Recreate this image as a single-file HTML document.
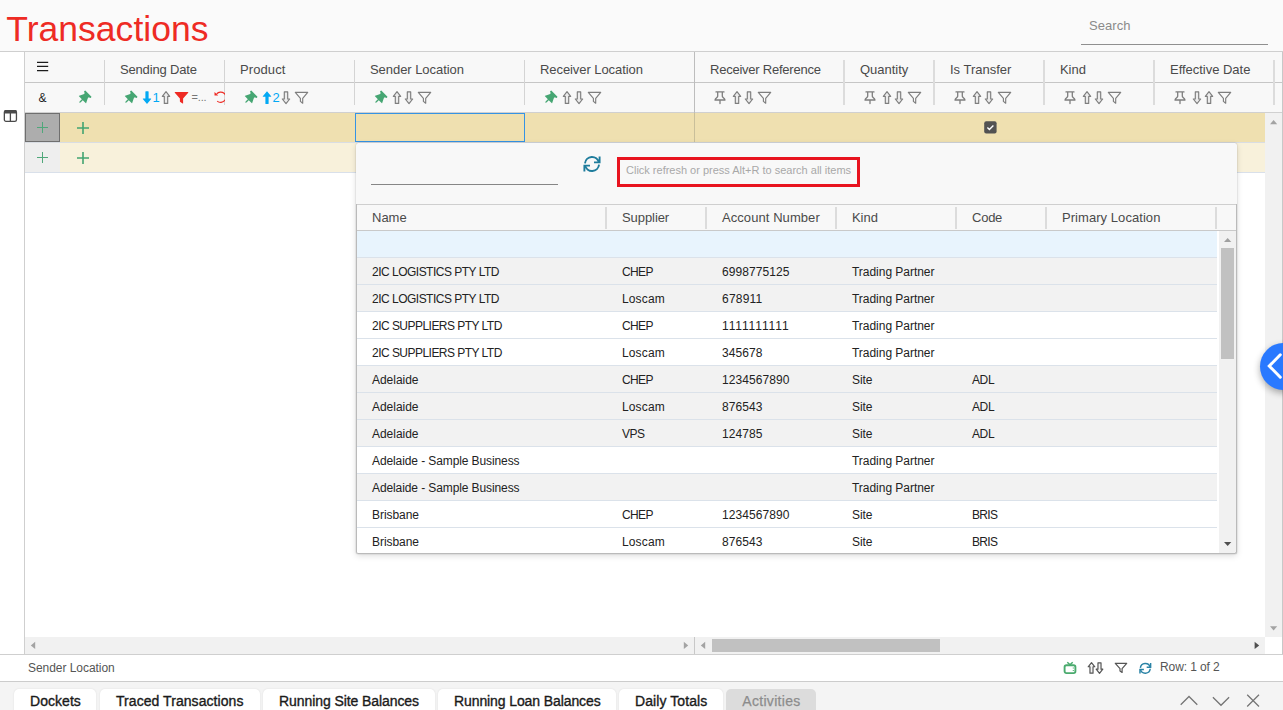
<!DOCTYPE html>
<html lang="en"><head><meta charset="utf-8"><title>Transactions</title>
<style>
html,body{margin:0;padding:0}
body{width:1283px;height:710px;overflow:hidden;position:relative;background:#fafafa;font-family:"Liberation Sans",sans-serif}
.r{position:absolute;display:block}
.t{position:absolute;white-space:pre;font-family:"Liberation Sans",sans-serif}
</style></head><body>
<div class="t" style="left:6.3px;top:9.85px;font-size:35.5px;line-height:39.5px;color:#ee2b24;letter-spacing:0.024px;">Transactions</div>
<div class="t" style="left:1089px;top:16.5px;font-size:13px;line-height:17px;color:#8a8a8a;letter-spacing:0.049px;">Search</div>
<div class="r" style="left:1081px;top:44px;width:187px;height:1px;background:#8f8f8f;"></div>
<div class="r" style="left:0px;top:51px;width:1283px;height:1px;background:#cfcfcf;"></div>
<div class="r" style="left:0px;top:52px;width:25px;height:602px;background:#ffffff;"></div>
<div class="r" style="left:25px;top:113px;width:1240px;height:524px;background:#ffffff;"></div>
<div class="r" style="left:24px;top:52px;width:1px;height:603px;background:#cfcfcf;"></div>
<div class="r" style="left:25px;top:52px;width:1257px;height:60px;background:#f8f8f8;"></div>
<div class="r" style="left:25px;top:82px;width:1258px;height:1px;background:#c6c6c6;"></div>
<div class="r" style="left:25px;top:112px;width:1258px;height:1px;background:#d0d0d0;"></div>
<div class="t" style="left:120px;top:61px;font-size:13px;line-height:17px;color:#4a4a4a;letter-spacing:-0.169px;">Sending Date</div>
<div class="t" style="left:240px;top:61px;font-size:13px;line-height:17px;color:#4a4a4a;letter-spacing:0.092px;">Product</div>
<div class="t" style="left:370px;top:61px;font-size:13px;line-height:17px;color:#4a4a4a;letter-spacing:-0.049px;">Sender Location</div>
<div class="t" style="left:540px;top:61px;font-size:13px;line-height:17px;color:#4a4a4a;letter-spacing:-0.074px;">Receiver Location</div>
<div class="t" style="left:710px;top:61px;font-size:13px;line-height:17px;color:#4a4a4a;letter-spacing:-0.231px;">Receiver Reference</div>
<div class="t" style="left:860px;top:61px;font-size:13px;line-height:17px;color:#4a4a4a;letter-spacing:-0.029px;">Quantity</div>
<div class="t" style="left:950px;top:61px;font-size:13px;line-height:17px;color:#4a4a4a;letter-spacing:-0.013px;">Is Transfer</div>
<div class="t" style="left:1060px;top:61px;font-size:13px;line-height:17px;color:#4a4a4a;letter-spacing:-0.047px;">Kind</div>
<div class="t" style="left:1170px;top:61px;font-size:13px;line-height:17px;color:#4a4a4a;letter-spacing:-0.025px;">Effective Date</div>
<div class="r" style="left:104px;top:60px;width:1px;height:45px;background:#d4d4d4;"></div>
<div class="r" style="left:224px;top:60px;width:1px;height:45px;background:#d4d4d4;"></div>
<div class="r" style="left:354px;top:60px;width:1px;height:45px;background:#d4d4d4;"></div>
<div class="r" style="left:524px;top:60px;width:1px;height:45px;background:#d4d4d4;"></div>
<div class="r" style="left:843px;top:60px;width:2px;height:45px;background:#dcdcdc;"></div>
<div class="r" style="left:933px;top:60px;width:2px;height:45px;background:#dcdcdc;"></div>
<div class="r" style="left:1043px;top:60px;width:2px;height:45px;background:#dcdcdc;"></div>
<div class="r" style="left:1153px;top:60px;width:2px;height:45px;background:#dcdcdc;"></div>
<div class="r" style="left:1273px;top:60px;width:2px;height:45px;background:#dcdcdc;"></div>
<div class="r" style="left:694px;top:52px;width:1px;height:90px;background:#bdbdbd;"></div>
<svg class="r" style="left:36px;top:60px;" width="13" height="13" viewBox="0 0 13 13"><path d="M1 2.300h11.200M1 6.400h11.200M1 10.600h11.200" stroke="#1c1c1c" stroke-width="1.250" fill="none"/></svg>
<div class="t" style="left:38.5px;top:89.5px;font-size:12px;line-height:16px;color:#222;letter-spacing:-0.547px;">&amp;</div>
<svg class="r" style="left:75.3px;top:88.6px;" width="18" height="18" viewBox="0 0 18 18"><g transform="translate(9,9) rotate(45) translate(0,-6.7)" fill="#46a673"><path d="M-4.050 .5h8.100q.5 0 .5.500v1q0 .5-.5.500h-1.250L2.900 4.400 5 8.600q.2.5-.3.500H.650v3.200l-.65 1.100-.65-1.100v-3.200H-4.700q-.5 0-.3-.5L-2.900 4.400-2.800 2.500h-1.250q-.5 0-.5-.5v-1q0-.5.500-.5z"/></g></svg>
<svg class="r" style="left:120.85px;top:88.6px;" width="18" height="18" viewBox="0 0 18 18"><g transform="translate(9,9) rotate(45) translate(0,-6.7)" fill="#46a673"><path d="M-4.050 .5h8.100q.5 0 .5.500v1q0 .5-.5.500h-1.250L2.900 4.400 5 8.600q.2.5-.3.500H.650v3.200l-.65 1.100-.65-1.100v-3.200H-4.700q-.5 0-.3-.5L-2.900 4.400-2.800 2.500h-1.250q-.5 0-.5-.5v-1q0-.5.500-.5z"/></g></svg>
<svg class="r" style="left:142px;top:91px;" width="10" height="14" viewBox="0 0 10 14"><path d="M5 13.100 .8 8.100q-.2-.5.4-.5h2.200V.7q0-.5.5-.5h2.200q.5 0 .5.500v6.900h2.200q.6 0 .4.500z" fill="#03a9f4"/></svg>
<div class="t" style="left:152.6px;top:89px;font-size:13px;line-height:17px;color:#03a9f4;letter-spacing:0.078px;">1</div>
<svg class="r" style="left:161px;top:91px;" width="10" height="14" viewBox="0 0 10 14"><path d="M5 .700 1.300 5.300h2v7.100h3.400V5.300h2z" fill="#ececec" stroke="#7e7e7e" stroke-width="1.150" stroke-linejoin="round"/></svg>
<svg class="r" style="left:174px;top:91px;" width="15" height="14" viewBox="0 0 15 14"><path d="M1.200 1h12.600q.9 0 .4.800L9.100 7.600v4.600q0 .6-.5.300L6.300 11q-.4-.3-.4-.8V7.600L.8 1.800Q.3 1 1.200 1z" fill="#ee2b24"/></svg>
<div class="t" style="left:191.6px;top:90px;font-size:11px;line-height:15px;color:#777;letter-spacing:-0.211px;">=...</div>
<svg class="r" style="left:214px;top:90px;" width="11" height="15" viewBox="0 0 11 15"><path d="M.500 1.900v3.700h3.700z" fill="#ee2b24"/><path d="M2.700 3.900A5.200 5.200 0 1 1 3.200 11.100" fill="none" stroke="#ee2b24" stroke-width="1.200"/></svg>
<svg class="r" style="left:240.85px;top:88.6px;" width="18" height="18" viewBox="0 0 18 18"><g transform="translate(9,9) rotate(45) translate(0,-6.7)" fill="#46a673"><path d="M-4.050 .5h8.100q.5 0 .5.500v1q0 .5-.5.500h-1.250L2.900 4.400 5 8.600q.2.5-.3.500H.650v3.200l-.65 1.100-.65-1.100v-3.200H-4.700q-.5 0-.3-.5L-2.900 4.400-2.800 2.500h-1.250q-.5 0-.5-.5v-1q0-.5.500-.5z"/></g></svg>
<svg class="r" style="left:262px;top:91px;" width="10" height="14" viewBox="0 0 10 14"><path d="M5 0.200 .8 5.200q-.2.500.4.500h2.200v6.900q0 .5.500.5h2.200q.5 0 .5-.5V5.700h2.200q.6 0 .4-.5z" fill="#03a9f4"/></svg>
<div class="t" style="left:272.4px;top:89px;font-size:13px;line-height:17px;color:#03a9f4;letter-spacing:0.078px;">2</div>
<svg class="r" style="left:281px;top:91px;" width="10" height="14" viewBox="0 0 10 14"><path d="M5 12.600 1.300 8h2V.900h3.400V8h2z" fill="#ececec" stroke="#7e7e7e" stroke-width="1.150" stroke-linejoin="round"/></svg>
<svg class="r" style="left:294px;top:91px;" width="15" height="14" viewBox="0 0 15 14"><path d="M1.300 1.400h12.400L8.700 7.300v4.900L6.400 10.400V7.300z" fill="none" stroke="#7e7e7e" stroke-width="1.150" stroke-linejoin="round"/></svg>
<svg class="r" style="left:370.85px;top:88.6px;" width="18" height="18" viewBox="0 0 18 18"><g transform="translate(9,9) rotate(45) translate(0,-6.7)" fill="#46a673"><path d="M-4.050 .5h8.100q.5 0 .5.500v1q0 .5-.5.500h-1.250L2.900 4.400 5 8.600q.2.5-.3.500H.650v3.200l-.65 1.100-.65-1.100v-3.200H-4.700q-.5 0-.3-.5L-2.900 4.400-2.800 2.500h-1.250q-.5 0-.5-.5v-1q0-.5.500-.5z"/></g></svg>
<svg class="r" style="left:392px;top:91px;" width="10" height="14" viewBox="0 0 10 14"><path d="M5 .700 1.300 5.300h2v7.100h3.400V5.300h2z" fill="#ececec" stroke="#7e7e7e" stroke-width="1.150" stroke-linejoin="round"/></svg>
<svg class="r" style="left:404px;top:91px;" width="10" height="14" viewBox="0 0 10 14"><path d="M5 12.600 1.300 8h2V.900h3.400V8h2z" fill="#ececec" stroke="#7e7e7e" stroke-width="1.150" stroke-linejoin="round"/></svg>
<svg class="r" style="left:417px;top:91px;" width="15" height="14" viewBox="0 0 15 14"><path d="M1.300 1.400h12.400L8.700 7.300v4.900L6.400 10.400V7.300z" fill="none" stroke="#7e7e7e" stroke-width="1.150" stroke-linejoin="round"/></svg>
<svg class="r" style="left:540.85px;top:88.6px;" width="18" height="18" viewBox="0 0 18 18"><g transform="translate(9,9) rotate(45) translate(0,-6.7)" fill="#46a673"><path d="M-4.050 .5h8.100q.5 0 .5.500v1q0 .5-.5.500h-1.250L2.900 4.400 5 8.600q.2.5-.3.500H.650v3.200l-.65 1.100-.65-1.100v-3.200H-4.700q-.5 0-.3-.5L-2.900 4.400-2.800 2.500h-1.250q-.5 0-.5-.5v-1q0-.5.500-.5z"/></g></svg>
<svg class="r" style="left:562px;top:91px;" width="10" height="14" viewBox="0 0 10 14"><path d="M5 .700 1.300 5.300h2v7.100h3.400V5.300h2z" fill="#ececec" stroke="#7e7e7e" stroke-width="1.150" stroke-linejoin="round"/></svg>
<svg class="r" style="left:574px;top:91px;" width="10" height="14" viewBox="0 0 10 14"><path d="M5 12.600 1.300 8h2V.900h3.400V8h2z" fill="#ececec" stroke="#7e7e7e" stroke-width="1.150" stroke-linejoin="round"/></svg>
<svg class="r" style="left:587px;top:91px;" width="15" height="14" viewBox="0 0 15 14"><path d="M1.300 1.400h12.400L8.700 7.300v4.900L6.400 10.400V7.300z" fill="none" stroke="#7e7e7e" stroke-width="1.150" stroke-linejoin="round"/></svg>
<svg class="r" style="left:713px;top:91px;" width="14" height="14" viewBox="0 0 14 14"><g fill="none" stroke="#7e7e7e" stroke-width="1.3" stroke-linecap="round" stroke-linejoin="round"><path d="M3 0.9h8M4.700 0.900v4.400c0 1.200-2.400 1.700-2.700 3.700h10c-.3-2-2.700-2.500-2.700-3.700V0.900M7 9v3.500"/></g></svg>
<svg class="r" style="left:732px;top:91px;" width="10" height="14" viewBox="0 0 10 14"><path d="M5 .700 1.300 5.300h2v7.100h3.400V5.300h2z" fill="#ececec" stroke="#7e7e7e" stroke-width="1.150" stroke-linejoin="round"/></svg>
<svg class="r" style="left:744px;top:91px;" width="10" height="14" viewBox="0 0 10 14"><path d="M5 12.600 1.300 8h2V.900h3.400V8h2z" fill="#ececec" stroke="#7e7e7e" stroke-width="1.150" stroke-linejoin="round"/></svg>
<svg class="r" style="left:757px;top:91px;" width="15" height="14" viewBox="0 0 15 14"><path d="M1.300 1.400h12.400L8.700 7.300v4.900L6.400 10.400V7.300z" fill="none" stroke="#7e7e7e" stroke-width="1.150" stroke-linejoin="round"/></svg>
<svg class="r" style="left:863px;top:91px;" width="14" height="14" viewBox="0 0 14 14"><g fill="none" stroke="#7e7e7e" stroke-width="1.3" stroke-linecap="round" stroke-linejoin="round"><path d="M3 0.9h8M4.700 0.900v4.400c0 1.200-2.400 1.700-2.700 3.700h10c-.3-2-2.700-2.500-2.700-3.700V0.900M7 9v3.500"/></g></svg>
<svg class="r" style="left:882px;top:91px;" width="10" height="14" viewBox="0 0 10 14"><path d="M5 .700 1.300 5.300h2v7.100h3.400V5.300h2z" fill="#ececec" stroke="#7e7e7e" stroke-width="1.150" stroke-linejoin="round"/></svg>
<svg class="r" style="left:894px;top:91px;" width="10" height="14" viewBox="0 0 10 14"><path d="M5 12.600 1.300 8h2V.900h3.400V8h2z" fill="#ececec" stroke="#7e7e7e" stroke-width="1.150" stroke-linejoin="round"/></svg>
<svg class="r" style="left:907px;top:91px;" width="15" height="14" viewBox="0 0 15 14"><path d="M1.300 1.400h12.400L8.700 7.300v4.900L6.400 10.400V7.300z" fill="none" stroke="#7e7e7e" stroke-width="1.150" stroke-linejoin="round"/></svg>
<svg class="r" style="left:953px;top:91px;" width="14" height="14" viewBox="0 0 14 14"><g fill="none" stroke="#7e7e7e" stroke-width="1.3" stroke-linecap="round" stroke-linejoin="round"><path d="M3 0.9h8M4.700 0.900v4.400c0 1.200-2.400 1.700-2.700 3.700h10c-.3-2-2.700-2.500-2.700-3.700V0.900M7 9v3.500"/></g></svg>
<svg class="r" style="left:972px;top:91px;" width="10" height="14" viewBox="0 0 10 14"><path d="M5 .700 1.300 5.300h2v7.100h3.400V5.300h2z" fill="#ececec" stroke="#7e7e7e" stroke-width="1.150" stroke-linejoin="round"/></svg>
<svg class="r" style="left:984px;top:91px;" width="10" height="14" viewBox="0 0 10 14"><path d="M5 12.600 1.300 8h2V.900h3.400V8h2z" fill="#ececec" stroke="#7e7e7e" stroke-width="1.150" stroke-linejoin="round"/></svg>
<svg class="r" style="left:997px;top:91px;" width="15" height="14" viewBox="0 0 15 14"><path d="M1.300 1.400h12.400L8.700 7.300v4.900L6.400 10.400V7.300z" fill="none" stroke="#7e7e7e" stroke-width="1.150" stroke-linejoin="round"/></svg>
<svg class="r" style="left:1063px;top:91px;" width="14" height="14" viewBox="0 0 14 14"><g fill="none" stroke="#7e7e7e" stroke-width="1.3" stroke-linecap="round" stroke-linejoin="round"><path d="M3 0.9h8M4.700 0.900v4.400c0 1.200-2.400 1.700-2.700 3.700h10c-.3-2-2.700-2.500-2.700-3.700V0.900M7 9v3.500"/></g></svg>
<svg class="r" style="left:1082px;top:91px;" width="10" height="14" viewBox="0 0 10 14"><path d="M5 .700 1.300 5.300h2v7.100h3.400V5.300h2z" fill="#ececec" stroke="#7e7e7e" stroke-width="1.150" stroke-linejoin="round"/></svg>
<svg class="r" style="left:1094px;top:91px;" width="10" height="14" viewBox="0 0 10 14"><path d="M5 12.600 1.300 8h2V.900h3.400V8h2z" fill="#ececec" stroke="#7e7e7e" stroke-width="1.150" stroke-linejoin="round"/></svg>
<svg class="r" style="left:1107px;top:91px;" width="15" height="14" viewBox="0 0 15 14"><path d="M1.300 1.400h12.400L8.700 7.300v4.900L6.400 10.400V7.300z" fill="none" stroke="#7e7e7e" stroke-width="1.150" stroke-linejoin="round"/></svg>
<svg class="r" style="left:1173px;top:91px;" width="14" height="14" viewBox="0 0 14 14"><g fill="none" stroke="#7e7e7e" stroke-width="1.3" stroke-linecap="round" stroke-linejoin="round"><path d="M3 0.9h8M4.700 0.900v4.400c0 1.200-2.400 1.700-2.700 3.700h10c-.3-2-2.700-2.500-2.700-3.700V0.900M7 9v3.500"/></g></svg>
<svg class="r" style="left:1192px;top:91px;" width="10" height="14" viewBox="0 0 10 14"><path d="M5 12.600 1.300 8h2V.900h3.400V8h2z" fill="#ececec" stroke="#7e7e7e" stroke-width="1.150" stroke-linejoin="round"/></svg>
<svg class="r" style="left:1204px;top:91px;" width="10" height="14" viewBox="0 0 10 14"><path d="M5 .700 1.300 5.300h2v7.100h3.400V5.300h2z" fill="#ececec" stroke="#7e7e7e" stroke-width="1.150" stroke-linejoin="round"/></svg>
<svg class="r" style="left:1217px;top:91px;" width="15" height="14" viewBox="0 0 15 14"><path d="M1.300 1.400h12.400L8.700 7.300v4.900L6.400 10.400V7.300z" fill="none" stroke="#7e7e7e" stroke-width="1.150" stroke-linejoin="round"/></svg>
<div class="r" style="left:60px;top:113px;width:1205px;height:29px;background:#efe0b0;"></div>
<div class="r" style="left:25px;top:142px;width:1240px;height:1px;background:#d9dde3;"></div>
<div class="r" style="left:60px;top:143px;width:1205px;height:29px;background:#f8f1db;"></div>
<div class="r" style="left:25px;top:143px;width:35px;height:29px;background:#eeeeee;"></div>
<div class="r" style="left:25px;top:172px;width:1240px;height:1px;background:#d9e0ea;"></div>
<div class="r" style="left:25px;top:113px;width:35px;height:29px;background:#adadad;box-sizing:border-box;border:1px solid #6f6f6f"></div>
<div class="r" style="left:694px;top:113px;width:1px;height:29px;background:#c9bf9a;"></div>
<svg class="r" style="left:37px;top:122px;" width="11" height="11" viewBox="0 0 11 11"><path d="M5.5 0v11M0 5.5h11" stroke="#4fa77a" stroke-width="1" fill="none"/></svg>
<svg class="r" style="left:37px;top:152px;" width="11" height="11" viewBox="0 0 11 11"><path d="M5.5 0v11M0 5.5h11" stroke="#4fa77a" stroke-width="1" fill="none"/></svg>
<svg class="r" style="left:77.2px;top:121.8px;" width="12" height="12" viewBox="0 0 12 12"><path d="M6 0v12M0 6h12" stroke="#42a471" stroke-width="1.6" fill="none"/></svg>
<svg class="r" style="left:77.2px;top:151.8px;" width="12" height="12" viewBox="0 0 12 12"><path d="M6 0v12M0 6h12" stroke="#42a471" stroke-width="1.6" fill="none"/></svg>
<div class="r" style="left:355px;top:113px;width:170px;height:29px;background:transparent;box-sizing:border-box;border:1px solid #3593e4"></div>
<svg class="r" style="left:983.5px;top:121.2px;" width="13" height="13" viewBox="0 0 13 13"><rect x="0.2" y="0.2" width="12.4" height="12.4" rx="2" fill="#525252"/><path d="M3.4 6.500l2 2 4-4" fill="none" stroke="#fff" stroke-width="1.4"/></svg>
<svg class="r" style="left:3px;top:109px;" width="15" height="14" viewBox="0 0 15 14"><rect x="1.350" y="1.650" width="12.100" height="10.700" rx="1.600" fill="none" stroke="#4a4a4a" stroke-width="1.300"/><path d="M1.300 2q0-1 1-1h10.200q1 0 1 1v2.500H1.300zM6.750 3.400h1.300v9h-1.300z" fill="#4a4a4a"/></svg>
<div class="r" style="left:1265px;top:113px;width:17px;height:524px;background:#f1f1f1;"></div>
<svg class="r" style="left:1269px;top:119px;" width="9" height="6" viewBox="0 0 9 6"><path d="M1 5.300 4.600 1 8.200 5.300z" fill="#a3a3a3"/></svg>
<svg class="r" style="left:1269px;top:625px;" width="9" height="6" viewBox="0 0 9 6"><path d="M1 1.200 4.600 5.500 8.200 1.200z" fill="#a3a3a3"/></svg>
<div class="r" style="left:25px;top:637px;width:1240px;height:17px;background:#f1f1f1;"></div>
<div class="r" style="left:694px;top:637px;width:1px;height:17px;background:#c8c8c8;"></div>
<svg class="r" style="left:30px;top:641px;" width="6" height="9" viewBox="0 0 6 9"><path d="M5.200 .7 .8 4.400 5.200 8.100z" fill="#a3a3a3"/></svg>
<svg class="r" style="left:683px;top:641px;" width="6" height="9" viewBox="0 0 6 9"><path d="M.8 .7 5.200 4.400 .8 8.100z" fill="#a3a3a3"/></svg>
<svg class="r" style="left:700px;top:641px;" width="6" height="9" viewBox="0 0 6 9"><path d="M5.200 .7 .8 4.400 5.200 8.100z" fill="#a3a3a3"/></svg>
<svg class="r" style="left:1254px;top:641px;" width="6" height="9" viewBox="0 0 6 9"><path d="M.6 .7 5.200 4.400 .6 8.100z" fill="#505050"/></svg>
<div class="r" style="left:712px;top:639px;width:228px;height:13px;background:#c1c1c1;"></div>
<div class="r" style="left:1265px;top:637px;width:17px;height:17px;background:#ffffff;"></div>
<div class="r" style="left:1282px;top:52px;width:1px;height:630px;background:#c8c8c8;"></div>
<div class="r" style="left:0px;top:654px;width:1283px;height:1px;background:#cfcfcf;"></div>
<div class="r" style="left:0px;top:655px;width:1283px;height:26px;background:#ffffff;"></div>
<div class="r" style="left:0px;top:681px;width:1283px;height:1px;background:#cccccc;"></div>
<div class="t" style="left:28px;top:659.5px;font-size:12px;line-height:16px;color:#555;letter-spacing:-0.046px;">Sender Location</div>
<div class="t" style="left:1160px;top:658.5px;font-size:12px;line-height:16px;color:#555;letter-spacing:-0.099px;">Row: 1 of 2</div>
<svg class="r" style="left:1063px;top:661px;" width="14" height="14" viewBox="0 0 14 14"><rect x="1.600" y="4.300" width="10.800" height="7.800" rx="1.800" fill="none" stroke="#4aab6e" stroke-width="1.900"/><path d="M4.300 1.200l2.700 2.600L9.700 1.200" fill="none" stroke="#4aab6e" stroke-width="1.500"/><path d="M10.300 6.500v1M10.300 9v1" stroke="#4aab6e" stroke-width="1.100"/></svg>
<svg class="r" style="left:1087px;top:661.5px;" width="9" height="12.6" viewBox="0 0 10 14"><path d="M5 .700 1.300 5.300h2v7.100h3.400V5.300h2z" fill="#f4f4f4" stroke="#555" stroke-width="1.300" stroke-linejoin="round"/></svg>
<svg class="r" style="left:1095px;top:661.5px;" width="9" height="12.6" viewBox="0 0 10 14"><path d="M5 12.600 1.300 8h2V.900h3.400V8h2z" fill="#f4f4f4" stroke="#555" stroke-width="1.300" stroke-linejoin="round"/></svg>
<svg class="r" style="left:1114px;top:662px;" width="14" height="12" viewBox="0 0 14 12"><path d="M1.300 1.300h11.400L8.100 6.600v3.900L6 9.100V6.600z" fill="none" stroke="#555" stroke-width="1.200" stroke-linejoin="round"/></svg>
<svg class="r" style="left:1139px;top:661.7px;" width="12.6" height="12.6" viewBox="0 0 18 18"><g fill="none" stroke="#2a83a6" stroke-width="2.1" stroke-linejoin="miter"><path d="M16.600 1.600V7.400H11"/><path d="M1.400 16.400V10.600H7"/><path d="M1.950 8.300A7.100 7.100 0 0 1 15.900 7.400M16.050 9.700A7.100 7.100 0 0 1 2.100 10.600"/></g></svg>
<div class="r" style="left:0px;top:682px;width:1283px;height:28px;background:#f4f4f4;"></div>
<div class="r" style="left:14px;top:689px;width:82px;height:24px;background:#ffffff;border-radius:5px 5px 0 0;box-shadow:0 0 2px rgba(0,0,0,.10)"></div>
<div class="t" style="left:30px;top:692px;font-size:14px;line-height:18px;color:#1a1a1a;letter-spacing:0.049px;font-weight:500;-webkit-text-stroke:0.35px #1a1a1a;">Dockets</div>
<div class="r" style="left:100px;top:689px;width:160px;height:24px;background:#ffffff;border-radius:5px 5px 0 0;box-shadow:0 0 2px rgba(0,0,0,.10)"></div>
<div class="t" style="left:116px;top:692px;font-size:14px;line-height:18px;color:#1a1a1a;letter-spacing:0.060px;font-weight:500;-webkit-text-stroke:0.35px #1a1a1a;">Traced Transactions</div>
<div class="r" style="left:263px;top:689px;width:172px;height:24px;background:#ffffff;border-radius:5px 5px 0 0;box-shadow:0 0 2px rgba(0,0,0,.10)"></div>
<div class="t" style="left:279px;top:692px;font-size:14px;line-height:18px;color:#1a1a1a;letter-spacing:-0.081px;font-weight:500;-webkit-text-stroke:0.35px #1a1a1a;">Running Site Balances</div>
<div class="r" style="left:438px;top:689px;width:178px;height:24px;background:#ffffff;border-radius:5px 5px 0 0;box-shadow:0 0 2px rgba(0,0,0,.10)"></div>
<div class="t" style="left:454px;top:692px;font-size:14px;line-height:18px;color:#1a1a1a;letter-spacing:-0.099px;font-weight:500;-webkit-text-stroke:0.35px #1a1a1a;">Running Loan Balances</div>
<div class="r" style="left:619px;top:689px;width:104px;height:24px;background:#ffffff;border-radius:5px 5px 0 0;box-shadow:0 0 2px rgba(0,0,0,.10)"></div>
<div class="t" style="left:635px;top:692px;font-size:14px;line-height:18px;color:#1a1a1a;letter-spacing:0.085px;font-weight:500;-webkit-text-stroke:0.35px #1a1a1a;">Daily Totals</div>
<div class="r" style="left:726px;top:689px;width:90px;height:24px;background:#dcdcdc;border-radius:5px 5px 0 0"></div>
<div class="t" style="left:742.3px;top:692px;font-size:14px;line-height:18px;color:#8c8c8c;letter-spacing:0.305px;font-weight:500;-webkit-text-stroke:0.25px #8c8c8c;">Activities</div>
<svg class="r" style="left:1179px;top:693px;" width="20" height="14" viewBox="0 0 20 14"><path d="M1.700 11.800 10 3.500l8.300 8.300" fill="none" stroke="#747474" stroke-width="1.250"/></svg>
<svg class="r" style="left:1211px;top:695px;" width="20" height="14" viewBox="0 0 20 14"><path d="M1.900 2.200 10 10.300l8.100-8.100" fill="none" stroke="#747474" stroke-width="1.250"/></svg>
<svg class="r" style="left:1245px;top:693px;" width="16" height="16" viewBox="0 0 16 16"><path d="M2.200 1.700l11.800 11.800M14 1.700 2.200 13.500" fill="none" stroke="#747474" stroke-width="1.250"/></svg>
<div class="r" style="left:356px;top:143px;width:881px;height:411px;background:#f8f8f8;border-radius:2.5px;box-shadow:0 2px 6px rgba(0,0,0,.13),0 0 1.5px rgba(0,0,0,.28)"></div>
<div class="r" style="left:371px;top:184px;width:187px;height:1px;background:#868686;"></div>
<svg class="r" style="left:582.6px;top:155.05px;" width="18" height="18" viewBox="0 0 18 18"><g fill="none" stroke="#1e7c9c" stroke-width="1.9" stroke-linejoin="miter"><path d="M16.600 1.600V7.400H11"/><path d="M1.400 16.400V10.600H7"/><path d="M1.950 8.300A7.100 7.100 0 0 1 15.900 7.400M16.050 9.700A7.100 7.100 0 0 1 2.100 10.600"/></g></svg>
<div class="r" style="left:617px;top:157px;width:243px;height:30px;background:transparent;box-sizing:border-box;border:3px solid #e8131f"></div>
<div class="t" style="left:626px;top:163px;font-size:11px;line-height:15px;color:#a8a8a8;letter-spacing:-0.004px;">Click refresh or press Alt+R to search all items</div>
<div class="r" style="left:357px;top:204px;width:879px;height:1px;background:#cfcfcf;"></div>
<div class="r" style="left:357px;top:205px;width:879px;height:25px;background:#f8f8f8;"></div>
<div class="r" style="left:357px;top:230px;width:879px;height:1px;background:#c9c9c9;"></div>
<div class="t" style="left:372px;top:209px;font-size:13px;line-height:17px;color:#4a4a4a;letter-spacing:-0.012px;">Name</div>
<div class="r" style="left:605px;top:207px;width:2px;height:22px;background:#dcdcdc;"></div>
<div class="t" style="left:622px;top:209px;font-size:13px;line-height:17px;color:#4a4a4a;letter-spacing:-0.074px;">Supplier</div>
<div class="r" style="left:705px;top:207px;width:2px;height:22px;background:#dcdcdc;"></div>
<div class="t" style="left:722px;top:209px;font-size:13px;line-height:17px;color:#4a4a4a;letter-spacing:0.068px;">Account Number</div>
<div class="r" style="left:835px;top:207px;width:2px;height:22px;background:#dcdcdc;"></div>
<div class="t" style="left:852px;top:209px;font-size:13px;line-height:17px;color:#4a4a4a;letter-spacing:-0.047px;">Kind</div>
<div class="r" style="left:955px;top:207px;width:2px;height:22px;background:#dcdcdc;"></div>
<div class="t" style="left:972px;top:209px;font-size:13px;line-height:17px;color:#4a4a4a;letter-spacing:-0.242px;">Code</div>
<div class="r" style="left:1045px;top:207px;width:2px;height:22px;background:#dcdcdc;"></div>
<div class="t" style="left:1062px;top:209px;font-size:13px;line-height:17px;color:#4a4a4a;letter-spacing:0.056px;">Primary Location</div>
<div class="r" style="left:1215px;top:207px;width:2px;height:22px;background:#dcdcdc;"></div>
<div class="r" style="left:357px;top:231px;width:860px;height:27px;background:#e8f4fd;"></div>
<div class="r" style="left:357px;top:257px;width:860px;height:1px;background:#dbe2ea;"></div>
<div class="r" style="left:357px;top:258px;width:860px;height:27px;background:#f2f2f2;"></div>
<div class="r" style="left:357px;top:284px;width:860px;height:1px;background:#dbe2ea;"></div>
<div class="t" style="left:372px;top:263.5px;font-size:12px;line-height:16px;color:#222;letter-spacing:-0.507px;">2IC LOGISTICS PTY LTD</div>
<div class="t" style="left:622px;top:263.5px;font-size:12px;line-height:16px;color:#222;letter-spacing:-0.645px;">CHEP</div>
<div class="t" style="left:722px;top:263.5px;font-size:12px;line-height:16px;color:#222;letter-spacing:0.070px;">6998775125</div>
<div class="t" style="left:852px;top:263.5px;font-size:12px;line-height:16px;color:#222;letter-spacing:-0.030px;">Trading Partner</div>
<div class="r" style="left:357px;top:285px;width:860px;height:27px;background:#f2f2f2;"></div>
<div class="r" style="left:357px;top:311px;width:860px;height:1px;background:#dbe2ea;"></div>
<div class="t" style="left:372px;top:290.5px;font-size:12px;line-height:16px;color:#222;letter-spacing:-0.507px;">2IC LOGISTICS PTY LTD</div>
<div class="t" style="left:622px;top:290.5px;font-size:12px;line-height:16px;color:#222;letter-spacing:0.135px;">Loscam</div>
<div class="t" style="left:722px;top:290.5px;font-size:12px;line-height:16px;color:#222;letter-spacing:0.219px;">678911</div>
<div class="t" style="left:852px;top:290.5px;font-size:12px;line-height:16px;color:#222;letter-spacing:-0.030px;">Trading Partner</div>
<div class="r" style="left:357px;top:312px;width:860px;height:27px;background:#ffffff;"></div>
<div class="r" style="left:357px;top:338px;width:860px;height:1px;background:#dbe2ea;"></div>
<div class="t" style="left:372px;top:317.5px;font-size:12px;line-height:16px;color:#222;letter-spacing:-0.531px;">2IC SUPPLIERS PTY LTD</div>
<div class="t" style="left:622px;top:317.5px;font-size:12px;line-height:16px;color:#222;letter-spacing:-0.645px;">CHEP</div>
<div class="t" style="left:722px;top:317.5px;font-size:12px;line-height:16px;color:#222;letter-spacing:0.872px;">1111111111</div>
<div class="t" style="left:852px;top:317.5px;font-size:12px;line-height:16px;color:#222;letter-spacing:-0.030px;">Trading Partner</div>
<div class="r" style="left:357px;top:339px;width:860px;height:27px;background:#ffffff;"></div>
<div class="r" style="left:357px;top:365px;width:860px;height:1px;background:#dbe2ea;"></div>
<div class="t" style="left:372px;top:344.5px;font-size:12px;line-height:16px;color:#222;letter-spacing:-0.531px;">2IC SUPPLIERS PTY LTD</div>
<div class="t" style="left:622px;top:344.5px;font-size:12px;line-height:16px;color:#222;letter-spacing:0.135px;">Loscam</div>
<div class="t" style="left:722px;top:344.5px;font-size:12px;line-height:16px;color:#222;letter-spacing:0.070px;">345678</div>
<div class="t" style="left:852px;top:344.5px;font-size:12px;line-height:16px;color:#222;letter-spacing:-0.030px;">Trading Partner</div>
<div class="r" style="left:357px;top:366px;width:860px;height:27px;background:#f2f2f2;"></div>
<div class="r" style="left:357px;top:392px;width:860px;height:1px;background:#dbe2ea;"></div>
<div class="t" style="left:372px;top:371.5px;font-size:12px;line-height:16px;color:#222;letter-spacing:-0.033px;">Adelaide</div>
<div class="t" style="left:622px;top:371.5px;font-size:12px;line-height:16px;color:#222;letter-spacing:-0.645px;">CHEP</div>
<div class="t" style="left:722px;top:371.5px;font-size:12px;line-height:16px;color:#222;letter-spacing:0.070px;">1234567890</div>
<div class="t" style="left:852px;top:371.5px;font-size:12px;line-height:16px;color:#222;letter-spacing:-0.086px;">Site</div>
<div class="t" style="left:972px;top:371.5px;font-size:12px;line-height:16px;color:#222;letter-spacing:-0.391px;">ADL</div>
<div class="r" style="left:357px;top:393px;width:860px;height:27px;background:#f2f2f2;"></div>
<div class="r" style="left:357px;top:419px;width:860px;height:1px;background:#dbe2ea;"></div>
<div class="t" style="left:372px;top:398.5px;font-size:12px;line-height:16px;color:#222;letter-spacing:-0.033px;">Adelaide</div>
<div class="t" style="left:622px;top:398.5px;font-size:12px;line-height:16px;color:#222;letter-spacing:0.135px;">Loscam</div>
<div class="t" style="left:722px;top:398.5px;font-size:12px;line-height:16px;color:#222;letter-spacing:0.070px;">876543</div>
<div class="t" style="left:852px;top:398.5px;font-size:12px;line-height:16px;color:#222;letter-spacing:-0.086px;">Site</div>
<div class="t" style="left:972px;top:398.5px;font-size:12px;line-height:16px;color:#222;letter-spacing:-0.391px;">ADL</div>
<div class="r" style="left:357px;top:420px;width:860px;height:27px;background:#f2f2f2;"></div>
<div class="r" style="left:357px;top:446px;width:860px;height:1px;background:#dbe2ea;"></div>
<div class="t" style="left:372px;top:425.5px;font-size:12px;line-height:16px;color:#222;letter-spacing:-0.033px;">Adelaide</div>
<div class="t" style="left:622px;top:425.5px;font-size:12px;line-height:16px;color:#222;letter-spacing:-0.557px;">VPS</div>
<div class="t" style="left:722px;top:425.5px;font-size:12px;line-height:16px;color:#222;letter-spacing:0.070px;">124785</div>
<div class="t" style="left:852px;top:425.5px;font-size:12px;line-height:16px;color:#222;letter-spacing:-0.086px;">Site</div>
<div class="t" style="left:972px;top:425.5px;font-size:12px;line-height:16px;color:#222;letter-spacing:-0.391px;">ADL</div>
<div class="r" style="left:357px;top:447px;width:860px;height:27px;background:#ffffff;"></div>
<div class="r" style="left:357px;top:473px;width:860px;height:1px;background:#dbe2ea;"></div>
<div class="t" style="left:372px;top:452.5px;font-size:12px;line-height:16px;color:#222;letter-spacing:-0.100px;">Adelaide - Sample Business</div>
<div class="t" style="left:852px;top:452.5px;font-size:12px;line-height:16px;color:#222;letter-spacing:-0.030px;">Trading Partner</div>
<div class="r" style="left:357px;top:474px;width:860px;height:27px;background:#f2f2f2;"></div>
<div class="r" style="left:357px;top:500px;width:860px;height:1px;background:#dbe2ea;"></div>
<div class="t" style="left:372px;top:479.5px;font-size:12px;line-height:16px;color:#222;letter-spacing:-0.100px;">Adelaide - Sample Business</div>
<div class="t" style="left:852px;top:479.5px;font-size:12px;line-height:16px;color:#222;letter-spacing:-0.030px;">Trading Partner</div>
<div class="r" style="left:357px;top:501px;width:860px;height:27px;background:#ffffff;"></div>
<div class="r" style="left:357px;top:527px;width:860px;height:1px;background:#dbe2ea;"></div>
<div class="t" style="left:372px;top:506.5px;font-size:12px;line-height:16px;color:#222;letter-spacing:-0.057px;">Brisbane</div>
<div class="t" style="left:622px;top:506.5px;font-size:12px;line-height:16px;color:#222;letter-spacing:-0.645px;">CHEP</div>
<div class="t" style="left:722px;top:506.5px;font-size:12px;line-height:16px;color:#222;letter-spacing:0.070px;">1234567890</div>
<div class="t" style="left:852px;top:506.5px;font-size:12px;line-height:16px;color:#222;letter-spacing:-0.086px;">Site</div>
<div class="t" style="left:972px;top:506.5px;font-size:12px;line-height:16px;color:#222;letter-spacing:-0.688px;">BRIS</div>
<div class="r" style="left:357px;top:528px;width:860px;height:25px;background:#ffffff;"></div>
<div class="t" style="left:372px;top:533.5px;font-size:12px;line-height:16px;color:#222;letter-spacing:-0.057px;">Brisbane</div>
<div class="t" style="left:622px;top:533.5px;font-size:12px;line-height:16px;color:#222;letter-spacing:0.135px;">Loscam</div>
<div class="t" style="left:722px;top:533.5px;font-size:12px;line-height:16px;color:#222;letter-spacing:0.070px;">876543</div>
<div class="t" style="left:852px;top:533.5px;font-size:12px;line-height:16px;color:#222;letter-spacing:-0.086px;">Site</div>
<div class="t" style="left:972px;top:533.5px;font-size:12px;line-height:16px;color:#222;letter-spacing:-0.688px;">BRIS</div>
<div class="r" style="left:1217px;top:231px;width:2px;height:322px;background:#ffffff;"></div>
<div class="r" style="left:1219px;top:231px;width:17px;height:322px;background:#f1f1f1;"></div>
<svg class="r" style="left:1223px;top:236px;" width="9" height="7" viewBox="0 0 9 7"><path d="M1 6.100 4.650 1.900 8.300 6.100z" fill="#a0a0a0"/></svg>
<svg class="r" style="left:1223px;top:540px;" width="9" height="7" viewBox="0 0 9 7"><path d="M1 1.900 4.650 6.100 8.300 1.900z" fill="#505050"/></svg>
<div class="r" style="left:1221px;top:248px;width:13px;height:111px;background:#c1c1c1;"></div>
<div class="r" style="left:356px;top:204px;width:881px;height:350px;background:transparent;box-sizing:border-box;border:1px solid #bababa;border-top:none;border-radius:0 0 2.5px 2.5px"></div>
<div class="r" style="left:1260px;top:343px;width:47px;height:47px;background:#2979ff;border-radius:50%;box-shadow:0 3px 7px rgba(0,0,0,.32)"></div>
<svg class="r" style="left:1265px;top:350px;" width="18" height="32" viewBox="0 0 18 32"><path d="M15.300 4.800 4.300 16l11 11.200" fill="none" stroke="#fff" stroke-width="3" stroke-linecap="round" stroke-linejoin="miter"/></svg>
</body></html>
